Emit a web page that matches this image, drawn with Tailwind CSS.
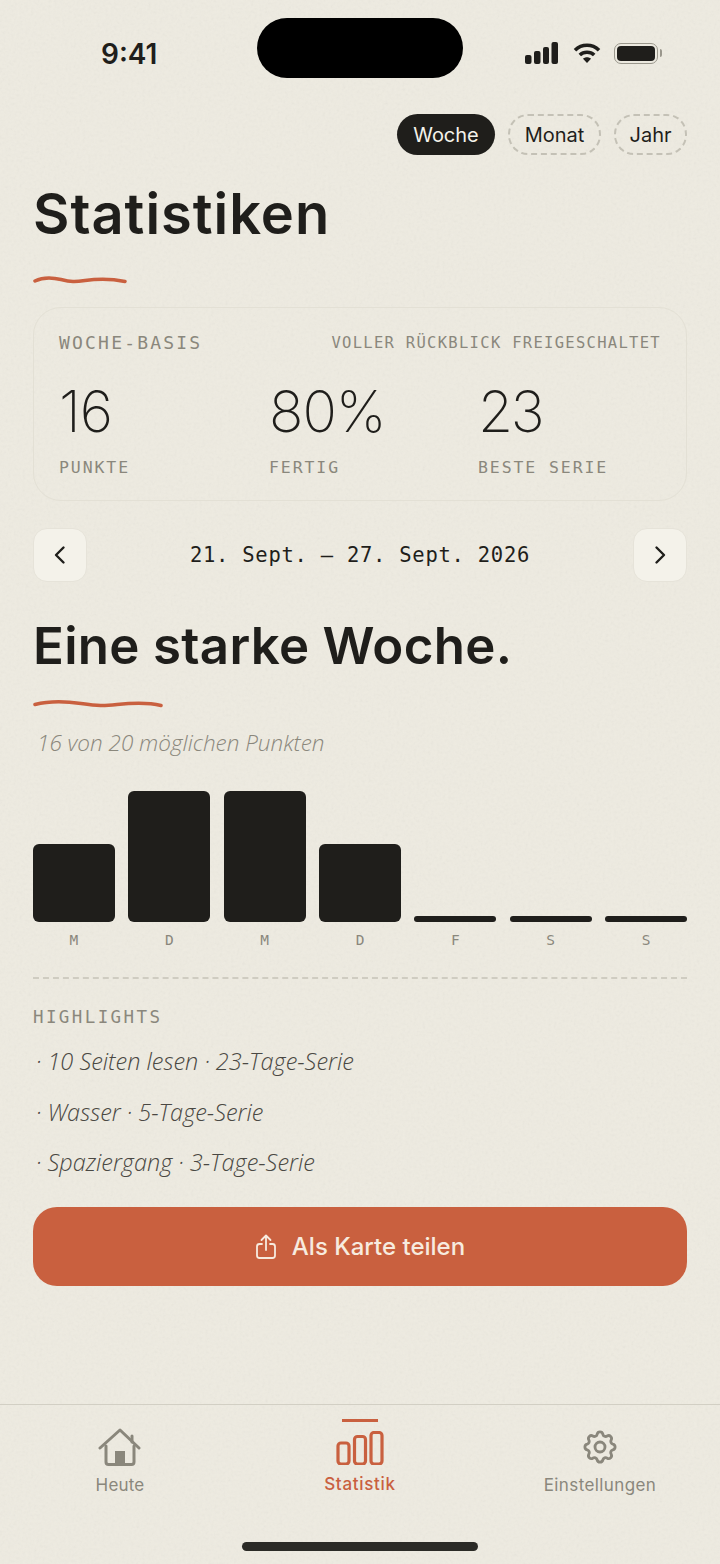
<!DOCTYPE html>
<html lang="de">
<head>
    <meta charset="UTF-8">
    <meta name="viewport" content="width=device-width, initial-scale=1.0">
    <title>Statistiken</title>
    <script src="https://cdn.jsdelivr.net/npm/@tailwindcss/browser@4"></script>
</head>
<body class="bg-[#eeebe1]">
<div class="relative w-[720px] h-[1564px] overflow-hidden bg-[#eeebe1] text-[#1f1e1b] font-['Inter',sans-serif] flex flex-col">

    <!-- paper grain -->
    <svg class="absolute inset-0 w-full h-full opacity-[0.08] pointer-events-none" xmlns="http://www.w3.org/2000/svg">
        <filter id="grain"><feTurbulence type="fractalNoise" baseFrequency="0.35" numOctaves="3" seed="4"/><feColorMatrix type="saturate" values="0"/></filter>
        <rect width="100%" height="100%" filter="url(#grain)"/>
    </svg>

    <!-- Dynamic island -->
    <div class="absolute left-[257px] top-[18px] w-[206px] h-[60px] rounded-full bg-black"></div>

    <!-- Status bar -->
    <div class="relative h-[114px] shrink-0 flex items-start justify-between pl-[101px] pr-[58px] pt-[38px]">
        <span class="text-[28px] leading-[33px] font-semibold">9:41</span>
        <div class="flex items-center pt-[4px]">
            <svg width="33" height="22" viewBox="0 0 33 22" fill="#1f1e1b">
                <rect x="0" y="13" width="6.5" height="9" rx="2"/><rect x="9" y="9" width="6.5" height="13" rx="2"/><rect x="18" y="5" width="6" height="17" rx="2"/><rect x="26.5" y="0" width="6.5" height="22" rx="2"/>
            </svg>
            <svg class="ml-[15px]" width="28" height="22" viewBox="0 0 28 22" fill="none" stroke="#1f1e1b" stroke-width="3.6">
                <path d="M2 8.2C8.8 1.6 19.2 1.6 26 8.2"/><path d="M6.8 13C10.800 9.300 17.200 9.300 21.200 13"/><path d="M14 21l-4-4.200c2.200-2 5.800-2 8 0z" fill="#1f1e1b" stroke="none"/>
            </svg>
            <div class="ml-[13px] flex items-center gap-[2px]">
                <div class="w-[44px] h-[21px] rounded-[7px] border-[1.5px] border-[#9a978c] p-[2px]"><div class="w-full h-full rounded-[4px] bg-[#1f1e1b]"></div></div>
                <div class="w-[2px] h-[8px] rounded-r bg-[#9a978c]"></div>
            </div>
        </div>
    </div>

    <!-- Content -->
    <div class="relative flex flex-col px-[33px]">
        <div class="flex justify-end gap-[13px]">
            <div class="h-[41px] w-[98px] rounded-full bg-[#1f1e1b] text-[#f4f2ea] text-[20px] flex items-center justify-center">Woche</div>
            <div class="h-[41px] w-[93px] rounded-[20px] border-2 border-dashed border-[#c4c1b6] text-[20px] flex items-center justify-center">Monat</div>
            <div class="h-[41px] w-[73px] rounded-[20px] border-2 border-dashed border-[#c4c1b6] text-[20px] flex items-center justify-center">Jahr</div>
        </div>

        <h1 class="mt-[25px] text-[56px] leading-[68px] font-semibold tracking-[1px]">Statistiken</h1>
        <svg class="mt-[26px]" width="95" height="12" viewBox="0 0 95 12" fill="none"><path d="M2 7C9 3.500 18 3 28 5.500S42 8 52 6.500 78 4.500 92 7.500" stroke="#c9603f" stroke-width="3.500" stroke-linecap="round"/></svg>

        <!-- Summary card -->
        <div class="mt-[21px] h-[194px] rounded-[28px] border border-[#e3e0d5] px-[25px] pt-[24px] font-['DejaVu_Sans_Mono',monospace]">
            <div class="flex items-center justify-between text-[#8a877c]">
                <span class="text-[18px] leading-[22px] tracking-[2.2px]">WOCHE-BASIS</span>
                <span class="text-[15.5px] leading-[22px] tracking-[1.3px]">VOLLER RÜCKBLICK FREIGESCHALTET</span>
            </div>
            <div class="mt-[26px] grid grid-cols-[210px_209px_1fr]">
                <div>
                    <div class="font-['Inter',sans-serif] font-extralight text-[57px] leading-[64px] tracking-[-1px]">16</div>
                    <div class="mt-[14px] text-[16.5px] leading-[20px] tracking-[1.900px] text-[#8a877c]">PUNKTE</div>
                </div>
                <div>
                    <div class="font-['Inter',sans-serif] font-extralight text-[57px] leading-[64px] tracking-[-1px]">80%</div>
                    <div class="mt-[14px] text-[16.5px] leading-[20px] tracking-[1.900px] text-[#8a877c]">FERTIG</div>
                </div>
                <div>
                    <div class="font-['Inter',sans-serif] font-extralight text-[57px] leading-[64px] tracking-[-2.500px]">23</div>
                    <div class="mt-[14px] text-[16.5px] leading-[20px] tracking-[1.900px] text-[#8a877c]">BESTE SERIE</div>
                </div>
            </div>
        </div>

        <!-- Week switcher -->
        <div class="mt-[27px] flex items-center justify-between">
            <div class="w-[54px] h-[54px] rounded-[14px] bg-[#f4f2ea] border border-[#e6e3d9] flex items-center justify-center">
                <svg width="24" height="24" viewBox="0 0 24 24" fill="none" stroke="#1f1e1b" stroke-width="2.400" stroke-linecap="round" stroke-linejoin="round"><path d="M15.500 4.500 8 12l7.500 7.500"/></svg>
            </div>
            <span class="font-['DejaVu_Sans_Mono',monospace] text-[20.5px] tracking-[0.74px]">21. Sept. – 27. Sept. 2026</span>
            <div class="w-[54px] h-[54px] rounded-[14px] bg-[#f4f2ea] border border-[#e6e3d9] flex items-center justify-center">
                <svg width="24" height="24" viewBox="0 0 24 24" fill="none" stroke="#1f1e1b" stroke-width="2.400" stroke-linecap="round" stroke-linejoin="round"><path d="M8.500 4.500 16 12l-7.500 7.500"/></svg>
            </div>
        </div>

        <h2 class="mt-[33px] text-[51px] leading-[62px] font-semibold tracking-[0.3px]">Eine starke Woche.</h2>
        <svg class="mt-[20px]" width="130" height="12" viewBox="0 0 130 12" fill="none"><path d="M2 7.500C14 4.500 30 4 48 6.500S70 9 84 7.500 116 5.500 128 8.500" stroke="#c9603f" stroke-width="3.500" stroke-linecap="round"/></svg>
        <p class="mt-[20px] ml-[4px] font-['Open_Sans',sans-serif] italic font-light text-[22.5px] leading-[28px] text-[#8a877c]">16 von 20 möglichen Punkten</p>

        <!-- Bars -->
        <div class="mt-[34px] h-[131px] grid grid-cols-7 gap-[13.5px] items-end">
            <div class="h-[78px] rounded-[6px] bg-[#1f1e1b]"></div>
            <div class="h-[131px] rounded-[6px] bg-[#1f1e1b]"></div>
            <div class="h-[131px] rounded-[6px] bg-[#1f1e1b]"></div>
            <div class="h-[78px] rounded-[6px] bg-[#1f1e1b]"></div>
            <div class="h-[6px] rounded-full bg-[#1f1e1b]"></div>
            <div class="h-[6px] rounded-full bg-[#1f1e1b]"></div>
            <div class="h-[6px] rounded-full bg-[#1f1e1b]"></div>
        </div>
        <div class="mt-[9px] grid grid-cols-7 gap-[13.5px] text-center font-['DejaVu_Sans_Mono',monospace] text-[14.5px] leading-[18px] text-[#8a877c]">
            <span>M</span><span>D</span><span>M</span><span>D</span><span>F</span><span>S</span><span>S</span>
        </div>

        <div class="mt-[28px] border-t-2 border-dashed border-[#cfccc1]"></div>

        <div class="mt-[27px] font-['DejaVu_Sans_Mono',monospace] text-[17.5px] leading-[22px] tracking-[2.400px] text-[#8a877c]">HIGHLIGHTS</div>
        <ul class="mt-[19px] ml-[3px] flex flex-col gap-[21.5px] font-['Open_Sans',sans-serif] italic font-light text-[23.5px] leading-[29px] text-[#4a4843]">
            <li>· 10 Seiten lesen · 23-Tage-Serie</li>
            <li>· Wasser · 5-Tage-Serie</li>
            <li>· Spaziergang · 3-Tage-Serie</li>
        </ul>

        <button class="mt-[30px] h-[79px] rounded-[24px] bg-[#c9603f] text-[24px] font-medium text-[#f7ebdf] flex items-center justify-center gap-[15px]">
            <svg width="22" height="26" viewBox="0 0 22 26" fill="none" stroke="#f7ebdf" stroke-width="1.800" stroke-linecap="round" stroke-linejoin="round"><path d="M7 10H4.500A2.500 2.500 0 0 0 2 12.500v9A2.500 2.500 0 0 0 4.500 24h13a2.500 2.500 0 0 0 2.500-2.500v-9A2.500 2.500 0 0 0 17.500 10H15"/><path d="M11 16V2M6.500 6 11 1.500 15.500 6"/></svg>
            Als Karte teilen
        </button>
    </div>

    <!-- Tab bar -->
    <div class="absolute left-0 right-0 top-[1404px] h-[160px] border-t border-[#d2cfc4] grid grid-cols-3 text-[17px]">
        <div class="flex flex-col items-center pt-[22px] text-[#8a877c]">
            <svg width="44" height="40" viewBox="0 0 44 40" fill="none" stroke="#8a877c" stroke-width="3" stroke-linecap="round" stroke-linejoin="round">
                <path d="M2 21 22 3l19 18"/><path d="M34 9v6"/><path d="M8 19v16a2.500 2.500 0 0 0 2.500 2.500h23A2.500 2.500 0 0 0 36 35V19"/><rect x="17" y="24" width="10" height="13" fill="#8a877c" stroke="none"/>
            </svg>
            <span class="mt-[7px] leading-[22px] tracking-[0.2px]">Heute</span>
        </div>
        <div class="relative flex flex-col items-center pt-[26px] text-[#c9603f] font-medium">
            <div class="absolute top-[14px] w-[36px] h-[3px] bg-[#c9603f]"></div>
            <svg width="48" height="34" viewBox="0 0 48 34" fill="none" stroke="#c9603f" stroke-width="3.200">
                <rect x="2" y="12" width="11" height="21" rx="3"/><rect x="18.500" y="5.500" width="11" height="27.500" rx="3"/><rect x="35" y="1.500" width="11" height="31.500" rx="3"/>
            </svg>
            <span class="mt-[8px] leading-[22px] tracking-[0.7px]">Statistik</span>
        </div>
        <div class="flex flex-col items-center pt-[22px] text-[#8a877c]">
            <svg width="40" height="40" viewBox="0 0 24 24" fill="none" stroke="#8a877c" stroke-width="1.700" stroke-linecap="round" stroke-linejoin="round">
                <path d="M10.300 4.300c.4-1.800 3-1.800 3.400 0a1.700 1.700 0 0 0 2.600 1.100c1.500-.9 3.300.8 2.400 2.400a1.700 1.700 0 0 0 1 2.500c1.800.4 1.800 3 0 3.400a1.700 1.700 0 0 0-1 2.600c.9 1.500-.9 3.300-2.400 2.400a1.700 1.700 0 0 0-2.600 1c-.4 1.800-3 1.800-3.400 0a1.700 1.700 0 0 0-2.600-1c-1.500.9-3.300-.9-2.400-2.400a1.700 1.700 0 0 0-1-2.600c-1.800-.4-1.800-3 0-3.400a1.700 1.700 0 0 0 1-2.500c-.9-1.600.9-3.300 2.400-2.400a1.700 1.700 0 0 0 2.600-1.100z"/><circle cx="12" cy="12" r="3"/>
            </svg>
            <span class="mt-[7px] leading-[22px] tracking-[0.4px]">Einstellungen</span>
        </div>
    </div>

    <!-- Home indicator -->
    <div class="absolute left-[242px] top-[1542px] w-[236px] h-[9px] rounded-full bg-[#2b2a26]"></div>
</div>
</body>
</html>
